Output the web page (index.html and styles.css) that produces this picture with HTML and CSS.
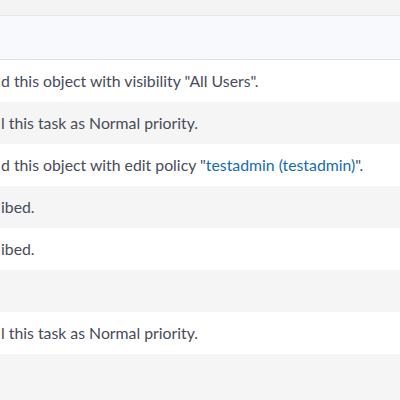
FILE: index.html
```html
<!DOCTYPE html>
<html>
<head>
<meta charset="utf-8">
<link rel="stylesheet" href="styles.css">
</head>
<body>
<div class="top"></div>
<div class="header"></div>
<ul class="feed">
  <li class="row">d this object with visibility "All Users".</li>
  <li class="row alt">l this task as Normal priority.</li>
  <li class="row">d this object with edit policy "<a class="link" href="#">testadmin (testadmin)</a>".</li>
  <li class="row alt">ibed.</li>
  <li class="row">ibed.</li>
  <li class="row alt"></li>
  <li class="row">l this task as Normal priority.</li>
  <li class="row alt"></li>
</ul>
</body>
</html>
```
FILE: styles.css
```css
html, body {
  margin: 0;
  padding: 0;
  background: #f5f5f5;
}
body {
  font-family: Lato, "Liberation Sans", sans-serif;
  font-size: 15.8px;
  color: #474c5a;
}
.top {
  height: 15px;
  background: #f4f4f4;
  border-bottom: 1px solid #e3e7ef;
}
.header {
  height: 43px;
  background: #f8f9fc;
  border-bottom: 1px solid #dce2ec;
}
.feed {
  list-style: none;
  margin: 0;
  padding: 0;
}
.row {
  height: 42px;
  line-height: 42px;
  padding-left: 1px;
  background: #ffffff;
  white-space: nowrap;
}
.row.alt {
  background: #f5f5f5;
}
.link {
  color: #136cb2;
  text-decoration: none;
}
```
